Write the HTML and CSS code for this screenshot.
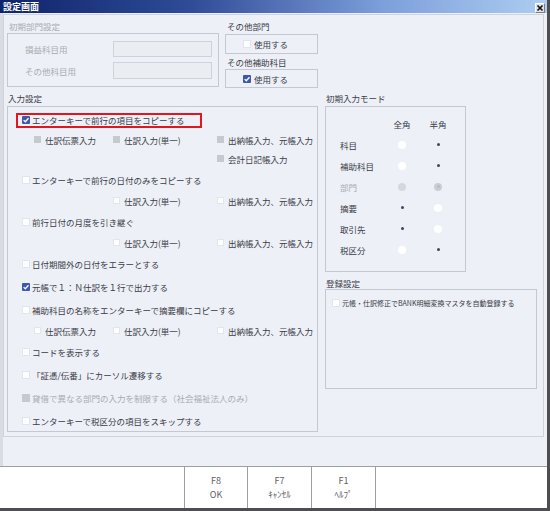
FILE: index.html
```html
<!DOCTYPE html>
<html lang="ja">
<head>
<meta charset="utf-8">
<title>設定画面</title>
<link rel="stylesheet" href="styles.css">
</head>
<body>
<div class="window">
  <div class="titlebar">
    <span class="title">設定画面</span>
    <span class="close"><svg viewBox="0 0 8 8" width="8" height="8"><path d="M1.5 1.5 L6.5 6.5 M6.5 1.5 L1.5 6.5" stroke="#111" stroke-width="1.6"/></svg></span>
  </div>
  <div class="body">
    <div class="panel">
      <div class="top">
        <section class="grp grp-dept dis">
          <div class="glabel">初期部門設定</div>
          <div class="gbox dept-box">
            <div class="field"><span class="flabel">損益科目用</span><span class="input"></span></div>
            <div class="field f2"><span class="flabel">その他科目用</span><span class="input"></span></div>
          </div>
        </section>
        <section class="grp grp-other">
          <div class="glabel">その他部門</div>
          <div class="gbox small-box b1"><span class="cb"></span><span>使用する</span></div>
          <div class="glabel l2">その他補助科目</div>
          <div class="gbox small-box b2"><svg class="cbon" viewBox="0 0 8 8"><rect width="8" height="8" rx="1" fill="#3d58ad"/><path d="M1.6 4.1 L3.3 5.8 L6.5 2.2" stroke="#fff" stroke-width="1.3" fill="none"/></svg><span>使用する</span></div>
        </section>
      </div>
      <div class="bottom">
        <section class="grp grp-input">
          <div class="glabel">入力設定</div>
          <div class="gbox input-box">
            <div class="opt"><span class="hl"><svg class="cbon" viewBox="0 0 8 8"><rect width="8" height="8" rx="1" fill="#3d58ad"/><path d="M1.6 4.1 L3.3 5.8 L6.5 2.2" stroke="#fff" stroke-width="1.3" fill="none"/></svg><span>エンターキーで前行の項目をコピーする</span></span></div>
            <div class="sub">
              <span class="si"><span class="cb sm gray"></span>仕訳伝票入力</span>
              <span class="si"><span class="cb sm gray"></span>仕訳入力(単一)</span>
              <span class="si"><span class="cb sm gray"></span>出納帳入力、元帳入力</span>
            </div>
            <div class="sub">
              <span class="si c3"><span class="cb sm gray"></span>会計日記帳入力</span>
            </div>
            <div class="opt"><span class="cb"></span><span>エンターキーで前行の日付のみをコピーする</span></div>
            <div class="sub">
              <span class="si c2"><span class="cb sm"></span>仕訳入力(単一)</span>
              <span class="si"><span class="cb sm"></span>出納帳入力、元帳入力</span>
            </div>
            <div class="opt"><span class="cb"></span><span>前行日付の月度を引き継ぐ</span></div>
            <div class="sub">
              <span class="si c2"><span class="cb sm"></span>仕訳入力(単一)</span>
              <span class="si"><span class="cb sm"></span>出納帳入力、元帳入力</span>
            </div>
            <div class="opt"><span class="cb"></span><span>日付期間外の日付をエラーとする</span></div>
            <div class="opt"><svg class="cbon" viewBox="0 0 8 8"><rect width="8" height="8" rx="1" fill="#3d58ad"/><path d="M1.6 4.1 L3.3 5.8 L6.5 2.2" stroke="#fff" stroke-width="1.3" fill="none"/></svg><span>元帳で１：Ｎ仕訳を１行で出力する</span></div>
            <div class="opt"><span class="cb"></span><span>補助科目の名称をエンターキーで摘要欄にコピーする</span></div>
            <div class="sub">
              <span class="si"><span class="cb sm"></span>仕訳伝票入力</span>
              <span class="si"><span class="cb sm"></span>仕訳入力(単一)</span>
              <span class="si"><span class="cb sm"></span>出納帳入力、元帳入力</span>
            </div>
            <div class="opt"><span class="cb"></span><span>コードを表示する</span></div>
            <div class="opt"><span class="cb"></span><span>「証憑/伝番」にカーソル遷移する</span></div>
            <div class="opt dis"><span class="cb gray"></span><span>貸借で異なる部門の入力を制限する（社会福祉法人のみ）</span></div>
            <div class="opt"><span class="cb"></span><span>エンターキーで税区分の項目をスキップする</span></div>
          </div>
        </section>
        <div class="rightcol">
          <section class="grp grp-mode">
            <div class="glabel">初期入力モード</div>
            <div class="gbox mode-box">
              <span></span><span class="mh">全角</span><span class="mh">半角</span>
              <span class="ml">科目</span><span class="rd"></span><span class="rd on"></span>
              <span class="ml">補助科目</span><span class="rd"></span><span class="rd on"></span>
              <span class="ml dis">部門</span><span class="rd dim"></span><span class="rd dim on"></span>
              <span class="ml">摘要</span><span class="rd on"></span><span class="rd"></span>
              <span class="ml">取引先</span><span class="rd on"></span><span class="rd"></span>
              <span class="ml">税区分</span><span class="rd"></span><span class="rd on"></span>
            </div>
          </section>
          <section class="grp grp-reg">
            <div class="glabel">登録設定</div>
            <div class="gbox reg-box">
              <div class="reg-opt"><span class="cb"></span><span>元帳・仕訳修正でBANK明細変換マスタを自動登録する</span></div>
            </div>
          </section>
        </div>
      </div>
    </div>
  </div>
  <div class="footer">
    <div class="fspace"></div>
    <div class="fkey k1"><span>F8</span><span>OK</span></div>
    <div class="fkey"><span>F7</span><span>ｷｬﾝｾﾙ</span></div>
    <div class="fkey"><span>F1</span><span>ﾍﾙﾌﾟ</span></div>
    <div class="fend"></div>
  </div>
</div>
</body>
</html>
```
FILE: styles.css
```css
* { box-sizing: border-box; margin: 0; padding: 0; }
html, body { width: 550px; height: 511px; overflow: hidden; }
body {
  font-family: "Noto Sans CJK JP", "Noto Sans", sans-serif;
  font-size: 8.5px;
  color: #3a3c48;
  background: #edf0f6;
}
.window {
  width: 550px;
  height: 511px;
  display: flex;
  flex-direction: column;
  border-right: 3px solid #4e4e52;
  border-bottom: 3px solid #4e4e52;
  background: #edf0f6;
}
.titlebar {
  height: 13px;
  flex: none;
  display: flex;
  align-items: flex-start;
  justify-content: space-between;
  padding: 0 2px 0 3px;
  background: linear-gradient(to right, #0e246a 0%, #2f4c98 35%, #7d9fdb 70%, #adcdf1 100%);
}
.title {
  color: #fff;
  font-weight: bold;
  font-size: 9px;
  line-height: 13px;
}
.close {
  margin-top: 3px;
  width: 10px;
  height: 10px;
  display: flex;
  align-items: center;
  justify-content: center;
  background: #dde1e8;
  border: 1px solid;
  border-color: #fff #7c7c80 #7c7c80 #fff;
}
.body {
  height: 453px;
  flex: none;
  padding: 1px 3px 29px 3px;
  background: linear-gradient(to right, #d9dce3 3px, #edf0f6 3px);
}
.panel {
  height: 423px;
  border: 1px solid #cfd3da;
  padding: 5px 0 0 3px;
}
.top { display: flex; gap: 6px; height: 68px; }
.glabel { height: 12px; line-height: 12px; padding-left: 1px; white-space: nowrap; }
.gbox { border: 1px solid #c4c8d0; }
.dis, .dis .glabel { color: #a9abb4; }

.grp-dept { width: 212px; }
.grp-dept .glabel { padding-left: 2px; margin-bottom: 1px; }
.dept-box {
  height: 54px;
  padding: 7px 0 0 17px;
  display: flex;
  flex-direction: column;
  gap: 5px;
}
.field { display: flex; align-items: center; height: 16px; }
.field.f2 { height: 17px; }
.flabel { width: 88px; }
.input {
  width: 99px;
  height: 100%;
  background: #eaedf2;
  border: 1px solid #cfd2d9;
}

.grp-other { width: 93px; }
.grp-other .glabel { padding-left: 2px; margin-bottom: 2px; }
.grp-other .glabel.l2 { margin-bottom: 1px; }
.small-box {
  display: flex;
  align-items: center;
  gap: 3px;
  padding-left: 17px;
}
.small-box.b1 { height: 20px; margin-bottom: 2px; }
.small-box.b2 { height: 19px; }

.cb {
  flex: none;
  width: 8px;
  height: 8px;
  background: #fff;
  border: 1px solid #e2e5eb;
}
.cb.sm { width: 7px; height: 7px; }
.cb.gray { background: #c7c9ce; border-color: #c7c9ce; }
.cbon { flex: none; width: 8px; height: 8px; display: block; }

.bottom { display: flex; gap: 7px; margin-top: 4px; }
.grp-input { width: 311px; }
.grp-input .glabel, .grp-mode .glabel { margin-bottom: 2px; }
.input-box { height: 326px; padding: 0 0 0 14px; }
.opt {
  height: 23px;
  display: flex;
  align-items: center;
  gap: 2px;
  white-space: nowrap;
}
.hl {
  display: flex;
  align-items: center;
  gap: 2px;
  height: 15px;
  width: 186px;
  margin-left: -6px;
  margin-top: 4px;
  padding: 0 0 2px 4px;
  border: 2px solid #e3161f;
}
.sub {
  height: 19px;
  display: grid;
  grid-template-columns: 79px 104px auto;
  align-items: center;
  margin-left: 12px;
  white-space: nowrap;
}
.si { display: flex; align-items: center; gap: 4px; }
.si.c2 { grid-column: 2; }
.si.c3 { grid-column: 3; }

.rightcol { display: flex; flex-direction: column; }
.grp-mode { width: 141px; }
.mode-box {
  height: 166px;
  display: grid;
  grid-template-columns: 46px 32px 40px;
  grid-auto-rows: 21px;
  align-items: center;
  padding: 6px 0 0 14px;
}
.mh { text-align: center; }
.ml.dis { color: #a9abb4; }
.rd {
  justify-self: center;
  width: 8px;
  height: 8px;
  border-radius: 50%;
  background: #fff;
  display: flex;
  align-items: center;
  justify-content: center;
}
.rd.on { background: transparent; }
.rd.on::after {
  content: "";
  width: 3px;
  height: 3px;
  border-radius: 50%;
  background: #3e4562;
}
.rd.dim { background: #d6d8dd; }
.rd.dim.on { background: #cbcdd2; }
.rd.dim.on::after { background: #b9bbc0; }

.grp-reg { width: 212px; margin-top: 5px; }
.reg-box { height: 100px; padding: 2px 0 0 6px; }
.reg-opt {
  height: 22px;
  display: flex;
  align-items: center;
  gap: 2px;
  font-size: 7px;
  white-space: nowrap;
}

.footer {
  flex: 1;
  display: flex;
  background: #fff;
  border-top: 1px solid #9c9ea4;
}
.fspace { width: 184px; }
.fkey {
  width: 64px;
  border-left: 1px solid #9c9ea4;
  display: flex;
  flex-direction: column;
  align-items: center;
  justify-content: center;
  font-size: 9px;
  line-height: 14px;
  color: #5c5e66;
}
.fkey.k1 { width: 63px; }
.fend { flex: 1; border-left: 1px solid #9c9ea4; }
```
